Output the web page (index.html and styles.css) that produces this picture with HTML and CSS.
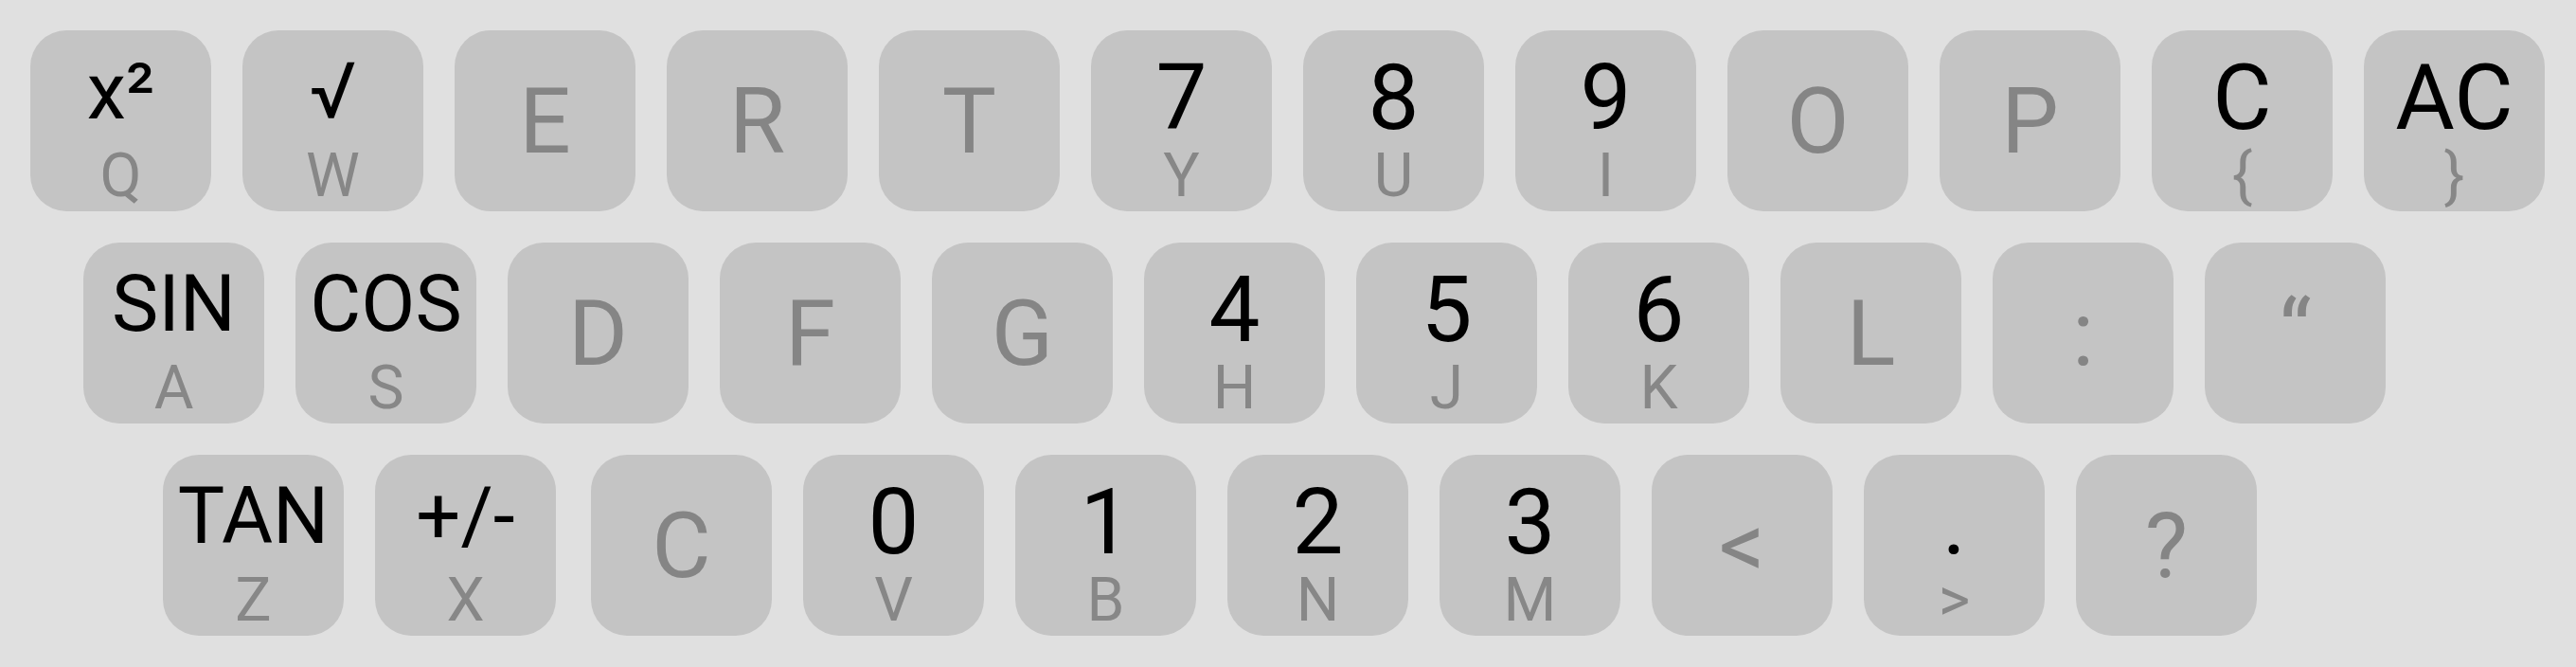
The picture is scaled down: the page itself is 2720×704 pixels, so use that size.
FILE: index.html
```html
<!DOCTYPE html>
<html lang="en">
<head>
<meta charset="utf-8">
<title>Keyboard</title>
<link rel="stylesheet" href="styles.css">
</head>
<body>
<div class="keyboard">
  <div class="row row-1">
    <div class="key"><span class="main sm">x²</span><span class="sub">Q</span></div>
    <div class="key"><span class="main sm">√</span><span class="sub">W</span></div>
    <div class="key single"><span class="dim">E</span></div>
    <div class="key single"><span class="dim">R</span></div>
    <div class="key single"><span class="dim">T</span></div>
    <div class="key"><span class="main">7</span><span class="sub">Y</span></div>
    <div class="key"><span class="main">8</span><span class="sub">U</span></div>
    <div class="key"><span class="main">9</span><span class="sub">I</span></div>
    <div class="key single"><span class="dim">O</span></div>
    <div class="key single"><span class="dim">P</span></div>
    <div class="key"><span class="main">C</span><span class="sub">{</span></div>
    <div class="key"><span class="main">AC</span><span class="sub">}</span></div>
  </div>
  <div class="row row-2">
    <div class="key"><span class="main sm">SIN</span><span class="sub">A</span></div>
    <div class="key"><span class="main sm">COS</span><span class="sub">S</span></div>
    <div class="key single"><span class="dim">D</span></div>
    <div class="key single"><span class="dim">F</span></div>
    <div class="key single"><span class="dim">G</span></div>
    <div class="key"><span class="main">4</span><span class="sub">H</span></div>
    <div class="key"><span class="main">5</span><span class="sub">J</span></div>
    <div class="key"><span class="main">6</span><span class="sub">K</span></div>
    <div class="key single"><span class="dim">L</span></div>
    <div class="key single"><span class="dim">:</span></div>
    <div class="key single"><span class="dim">“</span></div>
  </div>
  <div class="row row-3">
    <div class="key"><span class="main sm">TAN</span><span class="sub">Z</span></div>
    <div class="key"><span class="main sm">+/-</span><span class="sub">X</span></div>
    <div class="key single wide-gap"><span class="dim">C</span></div>
    <div class="key"><span class="main">0</span><span class="sub">V</span></div>
    <div class="key"><span class="main">1</span><span class="sub">B</span></div>
    <div class="key"><span class="main">2</span><span class="sub">N</span></div>
    <div class="key"><span class="main">3</span><span class="sub">M</span></div>
    <div class="key single"><span class="dim">&lt;</span></div>
    <div class="key"><span class="main">.</span><span class="sub">&gt;</span></div>
    <div class="key single"><span class="dim">?</span></div>
  </div>
</div>
</body>
</html>
```

FILE: styles.css
```css
html, body {
  margin: 0;
  padding: 0;
}

body {
  background: #e0e0e0;
  font-family: Roboto, "DejaVu Sans", sans-serif;
  width: 2720px;
  height: 704px;
  overflow: hidden;
}

.keyboard {
  display: flex;
  flex-direction: column;
  gap: 33px;
  padding: 32px 32px 0 32px;
}

.row {
  display: flex;
  gap: 33px;
}

.row-2 {
  padding-left: 56px;
}

.row-3 {
  padding-left: 140px;
}

.key {
  width: 191px;
  height: 191px;
  flex: 0 0 191px;
  box-sizing: border-box;
  background: #c4c4c4;
  border-radius: 38px;
  display: flex;
  flex-direction: column;
  align-items: center;
  justify-content: flex-start;
  padding-top: 23px;
}

.key.single {
  justify-content: center;
  padding-top: 0;
}

.wide-gap {
  margin-left: 4px;
}

.main {
  color: #000;
  font-size: 96px;
  line-height: 96px;
  white-space: nowrap;
}

.main.sm {
  font-size: 83px;
  line-height: 83px;
}

.sub {
  color: #878787;
  font-size: 64px;
  line-height: 64px;
  margin-top: auto;
  margin-bottom: 5px;
}

.dim {
  color: #858585;
  font-size: 96px;
  line-height: 96px;
}
```
